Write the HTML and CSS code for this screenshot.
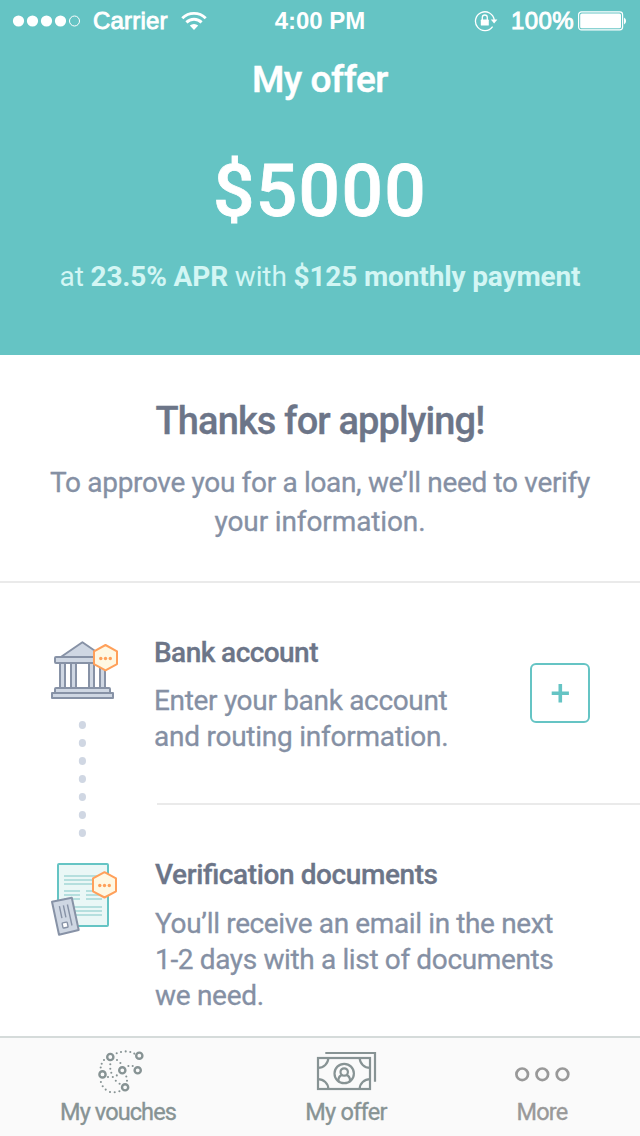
FILE: index.html
```html
<!DOCTYPE html>
<html lang="en">
<head>
<meta charset="utf-8">
<title>My offer</title>
<link rel="stylesheet" href="styles.css">
</head>
<body>
<div class="screen">
  <header class="hero">
    <div class="status">
      <div class="status-left">
        <svg class="signal" width="69" height="14" viewBox="0 0 69 14"><g fill="#fff"><circle cx="6.5" cy="7" r="5.6"/><circle cx="20.5" cy="7" r="5.6"/><circle cx="34.5" cy="7" r="5.6"/><circle cx="48.5" cy="7" r="5.6"/></g><circle cx="62.5" cy="7" r="5" fill="none" stroke="#fff"/></svg>
        <span class="carrier">Carrier</span>
        <svg class="wifi" width="26" height="20" viewBox="0 0 26 20"><g fill="none" stroke="#fff" stroke-width="2.9"><path d="M1.3 7.2a16.6 16.6 0 0 1 23.4 0"/><path d="M5.4 11.4a10.8 10.8 0 0 1 15.2 0"/></g><path d="M13 18.9l-4.2-4.3a6 6 0 0 1 8.4 0z" fill="#fff"/></svg>
      </div>
      <span class="time">4:00 PM</span>
      <div class="status-right">
        <svg class="lock" width="25" height="22" viewBox="0 0 25 22"><path d="M18.6 16.6A9.4 9.4 0 1 1 20.2 10" fill="none" stroke="#fff" stroke-width="1.3"/><path d="M16.8 9.6h6.6l-3.3 4z" fill="#fff"/><rect x="6.8" y="9.6" width="8" height="6" rx=".6" fill="#fff"/><path d="M8.3 10V7.5a2.5 2.5 0 0 1 5 0V10" fill="none" stroke="#fff" stroke-width="1.3"/></svg>
        <span class="percent">100%</span>
        <svg class="battery" width="50" height="20" viewBox="0 0 50 20"><rect x=".6" y=".9" width="44" height="18" rx="2.8" fill="none" stroke="#fff" stroke-width="1.2"/><rect x="2.2" y="2.5" width="40.8" height="14.8" rx="1.6" fill="#fff"/><path d="M46 6.5a4 4 0 0 1 0 7z" fill="#fff"/></svg>
      </div>
    </div>
    <h1 class="title">My offer</h1>
    <div class="amount">$5000</div>
    <p class="terms">at <b>23.5% APR</b> with <b>$125 monthly payment</b></p>
  </header>

  <section class="intro">
    <h2 class="intro-title">Thanks for applying!</h2>
    <p class="intro-text"><span class="line line-a">To approve you for a loan, we’ll need to verify</span><span class="line line-b">your information.</span></p>
  </section>

  <main class="steps">
    <div class="timeline">
      <svg width="70" height="60" viewBox="0 0 70 60">
        <g fill="#cfd7e3" stroke="#8792a6" stroke-width="2" stroke-linejoin="round">
          <path d="M10.5 17.3L32.4 2.2 54.3 17.3z"/>
          <path d="M10 23h5v25h-5zM21 23h5v25h-5zM39 23h5v25h-5zM50 23h5v25h-5z"/>
          <rect x="5" y="17" width="54" height="6" rx="1"/>
          <rect x="5" y="48" width="55" height="5" rx="1"/>
          <rect x="2" y="53" width="61" height="5"/>
        </g>
        <path d="M55.5 5L67 11.3V24.1L55.5 30.4 44 24.1V11.3z" fill="#fff8e3" stroke="#ffa05a" stroke-width="2" stroke-linejoin="round"/>
        <g fill="#ffa05a"><circle cx="50.8" cy="18.5" r="1.7"/><circle cx="55.5" cy="18.5" r="1.7"/><circle cx="60.3" cy="18.5" r="1.7"/></g>
      </svg>
      <svg class="dots" width="70" height="118" viewBox="0 0 70 118"><g fill="#d0d7e3"><ellipse cx="32.4" cy="5" rx="3.6" ry="4"/><ellipse cx="32.4" cy="23" rx="3.6" ry="4"/><ellipse cx="32.4" cy="41" rx="3.6" ry="4"/><ellipse cx="32.4" cy="59" rx="3.6" ry="4"/><ellipse cx="32.4" cy="77" rx="3.6" ry="4"/><ellipse cx="32.4" cy="95" rx="3.6" ry="4"/><ellipse cx="32.4" cy="113" rx="3.6" ry="4"/></g></svg>
      <svg width="70" height="76" viewBox="0 0 70 76">
        <rect x="8" y="2" width="50" height="62" rx="1" fill="#eaf7f6" stroke="#65c4c4" stroke-width="2"/>
        <path d="M14 14h34M14 18h34M14 22h34M14 29h16M14 33h16M14 37h16M36 29h16M36 33h16M36 37h16M24 45h28M24 49h28M24 53h28" stroke="#b5dfde" stroke-width="1.8"/>
        <path d="M54.5 10.2L66 16.4V29.3L54.5 35.5 43 29.3V16.4z" fill="#fff8e3" stroke="#ffa05a" stroke-width="2" stroke-linejoin="round"/>
        <g fill="#ffa05a"><circle cx="49.8" cy="23.5" r="1.7"/><circle cx="54.5" cy="23.5" r="1.7"/><circle cx="59.3" cy="23.5" r="1.7"/></g>
        <path d="M2 39.8L21.8 35.8 28.7 68 9 72.8z" fill="#cfd7e3" stroke="#8792a6" stroke-width="2" stroke-linejoin="round"/>
        <path d="M9.4 44.2l2.5 12M13.4 43.4l2.5 12M17.4 42.5l4.6 21" stroke="#8792a6" stroke-width="1.4"/>
        <rect x="12.5" y="60.5" width="5.2" height="5.2" rx=".8" transform="rotate(-12 15 63)" fill="#fff" stroke="#8792a6" stroke-width="1.4"/>
      </svg>
    </div>
    <div class="list">
      <article class="step step-bank">
        <div class="step-body">
          <h3 class="step-title t-bank">Bank account</h3>
          <p class="step-text"><span class="line line-c">Enter your bank account</span><span class="line line-d">and routing information.</span></p>
        </div>
        <button class="add" aria-label="Add bank account"><svg width="20" height="20" viewBox="0 0 20 20"><path d="M1.7 10.2h17.2M10.3 1v18.4" stroke="#65c4c4" stroke-width="3.6"/></svg></button>
      </article>
      <article class="step step-docs">
        <div class="step-body">
          <h3 class="step-title t-docs">Verification documents</h3>
          <p class="step-text"><span class="line line-e">You’ll receive an email in the next</span><span class="line line-f">1-2 days with a list of documents</span><span class="line line-g">we need.</span></p>
        </div>
      </article>
    </div>
  </main>

  <nav class="tabs">
    <a class="tab tab-vouches">
      <svg class="vouch-icon" width="50" height="46" viewBox="0 0 50 46">
        <g fill="none" stroke="#879394" stroke-width="2.4"><circle cx="14.3" cy="9" r="3.1"/><circle cx="43.3" cy="7.7" r="3.1"/><circle cx="26.3" cy="22.3" r="3.1"/><circle cx="41.7" cy="22.3" r="3.1"/><circle cx="6.5" cy="26.4" r="3.1"/><circle cx="29.1" cy="39.3" r="3.1"/></g>
        <path d="M20.7 5.3h0M25 4h0M29.7 3.4h0M34.3 4h0M38.3 5.6h0M8 12h0M5.7 15.7h0M4.7 19.5h0M14.3 16.3h0M14.3 20.7h0M15.3 24.8h0M16.8 29h0M19.8 32.7h0M23.6 35.7h0M21 12h0M24.4 15h0M32.4 18h0M36.7 18h0M12 29h0M20.8 27.4h0M30.3 28.5h0M31 32.7h0M4.9 34h0M6.7 38.3h0M9.7 41.6h0M14 44h0M18.7 44.3h0M23.4 43.3h0" stroke="#879394" stroke-width="2.1" stroke-linecap="round"/>
      </svg>
      <span class="tab-label l-vouches">My vouches</span>
    </a>
    <a class="tab tab-offer">
      <svg class="money-icon" width="62" height="46" viewBox="0 0 62 46">
        <g fill="none" stroke="#879394" stroke-width="2.2">
          <path d="M9.3 5H59v28.7"/>
          <rect x="2" y="10" width="52" height="31"/>
          <path d="M12.3 10A10.3 9.8 0 0 1 2 19.8M43.7 10A10.3 9.8 0 0 0 54 19.8M2 31.2A10.3 9.8 0 0 1 12.3 41M54 31.2A10.3 9.8 0 0 0 43.7 41"/>
          <circle cx="28.2" cy="25.5" r="9.7"/>
          <circle cx="28.2" cy="24" r="3.7"/>
          <path d="M22.3 33c0-3.6 2-5.6 4.3-6.1M34.1 33c0-3.6-2-5.6-4.3-6.1"/>
        </g>
      </svg>
      <span class="tab-label l-offer">My offer</span>
    </a>
    <a class="tab tab-more">
      <svg width="58" height="46" viewBox="0 0 58 46"><g fill="none" stroke="#999" stroke-width="2.7"><circle cx="9.2" cy="26.3" r="5.8"/><circle cx="29.3" cy="26.3" r="5.8"/><circle cx="49.5" cy="26.3" r="5.8"/></g></svg>
      <span class="tab-label l-more">More</span>
    </a>
  </nav>
</div>
</body>
</html>
```
FILE: styles.css
```css
* { box-sizing: border-box; }
body { margin: 0; background: #fff; font-family: Roboto, "Noto Sans", sans-serif; }
h1, h2, h3, p { margin: 0; }
svg { display: block; flex: none; }
.screen { width: 640px; height: 1136px; display: flex; flex-direction: column; overflow: hidden; }

.hero { height: 355px; flex: none; background: #65c4c4; color: #fff; text-align: center; }
.status { height: 40px; display: grid; grid-template-columns: 1fr auto 1fr; align-items: center; padding: 2px 12px 0 12px; font: 24px/36px "Liberation Sans", Arial, sans-serif; }
.status-left, .status-right { display: flex; align-items: center; }
.status-right { justify-content: flex-end; }
.carrier { margin: 0 13px 0 12px; letter-spacing: .2px; -webkit-text-stroke: .9px #fff; }
.time { font-weight: bold; }
.percent { margin: 0 4px 0 12px; letter-spacing: .4px; -webkit-text-stroke: .9px #fff; }

.title { font-size: 37px; line-height: 79px; font-weight: 500; letter-spacing: -.4px; -webkit-text-stroke: .5px; }
.amount { font-size: 73px; line-height: 144px; font-weight: 500; letter-spacing: 1.3px; -webkit-text-stroke: .8px; }
.terms { font-size: 28px; line-height: 27px; letter-spacing: -.14px; color: #d3f6f4; white-space: nowrap; }
.terms b { font-weight: 700; }

.intro { height: 228px; flex: none; padding-top: 46px; border-bottom: 2px solid #eaeaea; text-align: center; }
.intro-title { font-size: 38px; line-height: 40px; font-weight: 500; letter-spacing: -.88px; -webkit-text-stroke: .3px; color: #6c7588; }
.intro-text { margin-top: 22px; font-size: 28px; line-height: 39px; color: #8590a4; -webkit-text-stroke: .3px; }
.line { display: block; white-space: nowrap; }
.line-a { letter-spacing: -.33px; }
.line-b { letter-spacing: -.12px; }
.line-c { letter-spacing: -.32px; }
.line-d { letter-spacing: -.24px; }
.line-e { letter-spacing: -.38px; }
.line-f { letter-spacing: -.36px; }
.line-g { letter-spacing: -.3px; }

.steps { height: 453px; flex: none; display: flex; }
.timeline { width: 155px; padding: 57px 0 0 50px; display: flex; flex-direction: column; }
.dots { margin: 20px 0 24px; }
.list { flex: 1; }
.step { display: flex; justify-content: space-between; padding-top: 52px; }
.step-bank { height: 222px; padding-right: 50px; background: linear-gradient(#eaeaea, #eaeaea) 2px 100% / 100% 2px no-repeat; }
.step-title { font-size: 28px; line-height: 36px; font-weight: 500; color: #6c7588; white-space: nowrap; -webkit-text-stroke: .3px; }
.t-bank { letter-spacing: -.56px; }
.t-docs { letter-spacing: -.4px; font-feature-settings: "liga" 1; }
.step-text { margin-top: 12px; font-size: 28px; line-height: 36px; color: #8590a4; -webkit-text-stroke: .3px; }
.step-docs .step-text { margin-top: 13px; }
.step-bank .step-body { margin-left: -1px; }
.add { width: 60px; height: 60px; margin: 28px 0 0; padding: 0; display: flex; align-items: center; justify-content: center; border: 2px solid #65c4c4; border-radius: 6px; background: #fff; }

.tabs { height: 100px; flex: none; display: flex; background: #fafafa; border-top: 2px solid #d5dbda; }
.tab { display: flex; flex-direction: column; align-items: center; padding-top: 10px; color: #879394; }
.tab-vouches { width: 236px; }
.tab-offer { width: 220px; }
.tab-more { width: 172px; color: #999; }
.vouch-icon { margin-left: 6px; }
.money-icon { margin-left: 2px; }
.tab-label { margin-top: 3px; font-size: 23.5px; line-height: 30px; letter-spacing: -.9px; -webkit-text-stroke: .35px; }
.l-offer, .l-more { letter-spacing: -.75px; }
```
